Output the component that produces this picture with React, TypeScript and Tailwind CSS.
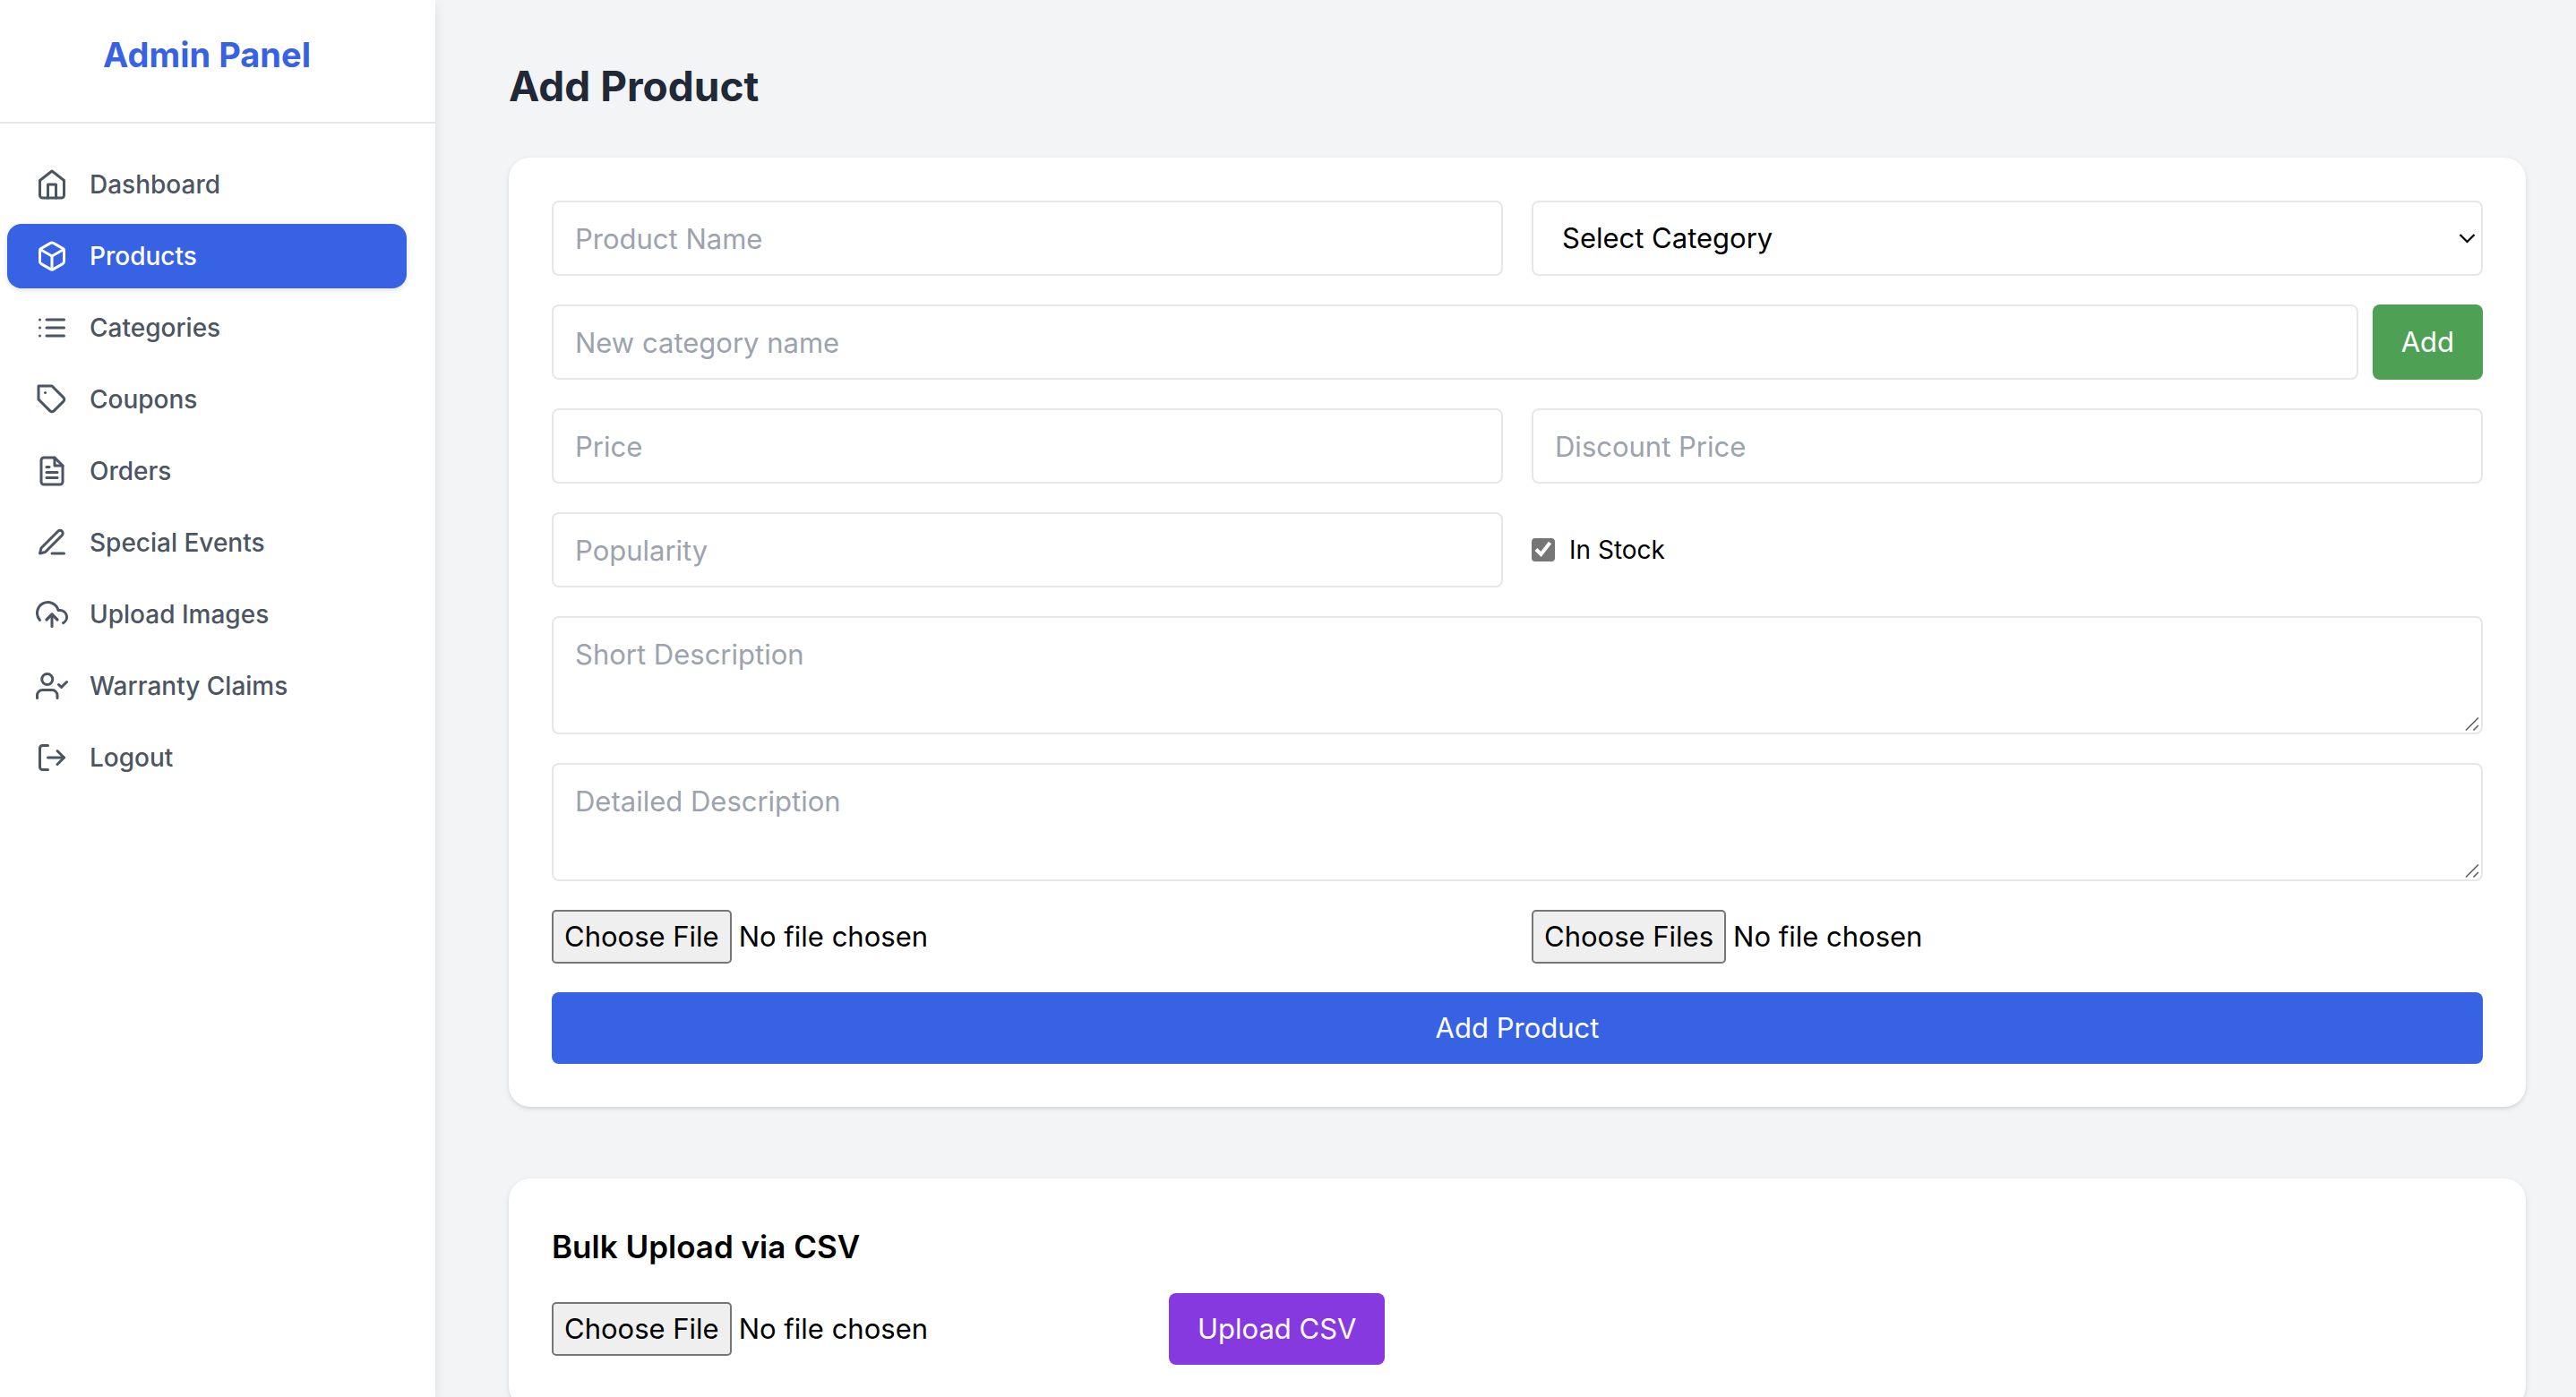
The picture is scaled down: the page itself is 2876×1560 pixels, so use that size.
import type { ComponentProps } from "react";
import type { IconType } from "react-icons";
import {
  FiBox,
  FiEdit3,
  FiFileText,
  FiHome,
  FiList,
  FiLogOut,
  FiTag,
  FiUploadCloud,
  FiUserCheck,
} from "react-icons/fi";

const navItems: { label: string; icon: IconType; active?: boolean }[] = [
  { label: "Dashboard", icon: FiHome },
  { label: "Products", icon: FiBox, active: true },
  { label: "Categories", icon: FiList },
  { label: "Coupons", icon: FiTag },
  { label: "Orders", icon: FiFileText },
  { label: "Special Events", icon: FiEdit3 },
  { label: "Upload Images", icon: FiUploadCloud },
  { label: "Warranty Claims", icon: FiUserCheck },
  { label: "Logout", icon: FiLogOut },
];

const cardClass =
  "rounded-3xl bg-white p-12 shadow-[0_2px_6px_rgba(0,0,0,0.1),0_2px_4px_-2px_rgba(0,0,0,0.1)]";

function Sidebar() {
  return (
    <aside className="z-10 w-[486px] shrink-0 bg-white shadow-[0_4px_12px_rgba(0,0,0,0.1)]">
      <div className="h-[138px] border-b-2 border-[#e5e7eb] pt-8 pr-6">
        <h2 className="text-center text-[38px] leading-[58px] font-bold text-[#3862e4]">Admin Panel</h2>
      </div>
      <nav className="flex flex-col gap-2 pt-8 pr-8 pl-2">
        {navItems.map(({ label, icon: Icon, active }) => (
          <a
            key={label}
            href="#"
            aria-current={active ? "page" : undefined}
            className={
              active
                ? "flex h-[72px] items-center gap-6 rounded-2xl bg-[#3862e4] px-8 text-[28px] font-medium text-white shadow-[0_2px_6px_rgba(0,0,0,0.12)]"
                : "flex h-[72px] items-center gap-6 rounded-2xl px-8 text-[28px] font-medium text-[#4b5563]"
            }
          >
            <Icon className="size-9" aria-hidden="true" />
            <span>{label}</span>
          </a>
        ))}
      </nav>
    </aside>
  );
}

function TextField({ label, ...rest }: { label: string } & ComponentProps<"input">) {
  return (
    <input
      type="text"
      aria-label={label}
      placeholder={label}
      className="h-[84px] w-full min-w-0 rounded-lg border-2 border-[#e5e7eb] bg-white px-6 placeholder:text-[#9ca3af]"
      {...rest}
    />
  );
}

function TextArea({ label }: { label: string }) {
  return (
    <div className="relative col-span-2 flex">
      <textarea
        aria-label={label}
        placeholder={label}
        className="h-[132px] w-full resize-none rounded-lg border-2 border-[#e5e7eb] bg-white px-6 py-4 leading-[50px] placeholder:text-[#9ca3af]"
      />
      <svg
        viewBox="0 0 16 16"
        className="pointer-events-none absolute right-1 bottom-1 size-4"
        fill="none"
        stroke="#5f5f5f"
        strokeWidth="1.6"
        aria-hidden="true"
      >
        <path d="M1 15.500L15 1.500M9.500 15.500L15 10" />
      </svg>
    </div>
  );
}

function CategorySelect() {
  return (
    <div className="relative">
      <select
        aria-label="Category"
        className="h-[84px] w-full appearance-none rounded-lg border-2 border-[#e5e7eb] bg-white px-8 text-black"
      >
        <option>Select Category</option>
      </select>
      <svg
        viewBox="0 0 20 12"
        className="pointer-events-none absolute top-9 right-2 h-3 w-5"
        fill="none"
        stroke="#000"
        strokeWidth="2.2"
        aria-hidden="true"
      >
        <path d="M2.500 2L10.500 10L18.500 2" />
      </svg>
    </div>
  );
}

function FileField({ label, ...rest }: { label: string } & ComponentProps<"input">) {
  return (
    <input
      type="file"
      aria-label={label}
      className="h-[60px] text-black file:mr-2 file:h-[60px] file:rounded-[5px] file:border-2 file:border-solid file:border-[#767676] file:bg-[#efefef] file:px-3 file:text-black"
      {...rest}
    />
  );
}

function StockCheckbox() {
  return (
    <label className="flex items-center gap-4 text-[28px] text-black">
      <span className="relative flex size-[26px]">
        <input
          type="checkbox"
          defaultChecked
          className="peer size-[26px] appearance-none rounded-sm border-2 border-[#767676] bg-white checked:bg-[#767676]"
        />
        <svg
          viewBox="0 0 26 26"
          className="pointer-events-none invisible absolute inset-0 size-[26px] peer-checked:visible"
          fill="none"
          stroke="#fff"
          strokeWidth="4"
          aria-hidden="true"
        >
          <path d="M5 12.500L10.500 18L20.500 5" />
        </svg>
      </span>
      <span>In Stock</span>
    </label>
  );
}

export default function App() {
  return (
    <div className="flex h-screen overflow-hidden bg-[#f3f4f6] font-['Inter','Liberation_Sans',sans-serif] text-[31px] leading-[48px]">
      <Sidebar />
      <main className="flex min-w-0 flex-1 flex-col overflow-y-auto pt-16 pr-14 pl-[82px] [scrollbar-width:none]">
        <h1 className="mb-12 text-[46px] leading-[64px] font-bold text-[#1f2937]">Add Product</h1>

        <form className={cardClass}>
          <div className="grid grid-cols-2 gap-8">
            <TextField label="Product Name" />
            <CategorySelect />
            <div className="col-span-2 flex gap-4">
              <TextField label="New category name" />
              <button type="button" className="rounded-lg bg-[#4ea154] px-8 text-white">
                Add
              </button>
            </div>
            <TextField label="Price" />
            <TextField label="Discount Price" />
            <TextField label="Popularity" />
            <StockCheckbox />
            <TextArea label="Short Description" />
            <TextArea label="Detailed Description" />
            <FileField label="Main image" />
            <FileField label="Gallery images" multiple />
            <button type="submit" className="col-span-2 h-20 rounded-lg bg-[#3862e4] text-white">
              Add Product
            </button>
          </div>
        </form>

        <section className="pt-20 pb-14">
          <div className={cardClass}>
            <h2 className="mb-6 text-[35px] leading-[56px] font-semibold text-black">Bulk Upload via CSV</h2>
            <form className="flex items-center gap-8">
              <div className="flex w-[657px]">
                <FileField label="CSV file" accept=".csv" />
              </div>
              <button type="submit" className="h-20 rounded-lg bg-[#8639df] px-8 text-white">
                Upload CSV
              </button>
            </form>
          </div>
        </section>
      </main>
    </div>
  );
}
